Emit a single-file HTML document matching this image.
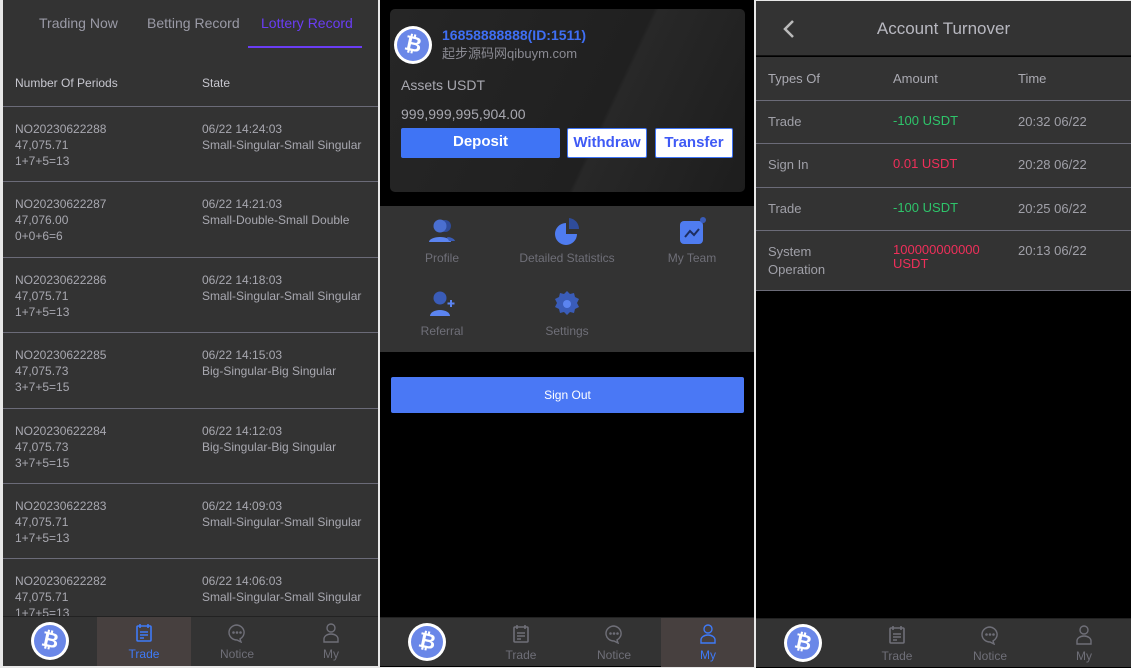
<!DOCTYPE html>
<html><head><meta charset="utf-8"><style>
*{margin:0;padding:0;box-sizing:border-box}
body{width:1131px;height:667px;background:#e8e8e8;font-family:"Liberation Sans","Noto Sans CJK SC",sans-serif;position:relative;overflow:hidden}
.p{position:absolute;top:0;height:667px;overflow:hidden}
#a{left:3px;width:375px;background:#333;top:0;height:666px}
#b{left:380px;width:374px;background:#000}
#c{left:756px;width:375px;background:#000;top:1px}
.tabs{position:absolute;top:0;left:0;right:0;height:50px;font-size:14px;color:#9a9aa6}
.tabs span{position:absolute;top:15px}
.ul{position:absolute;left:245px;width:114px;top:46px;height:2px;background:#6a3df5}
.hd{position:absolute;top:76px;font-size:12px;color:#c8c8d0}
.row{position:absolute;left:0;width:375px;border-top:1px solid #6b6b78;font-size:12px;color:#a8a8b0;line-height:16px}
.row .l{position:absolute;left:12px;top:14px}
.row .r{position:absolute;left:199px;top:14px}
.nav{position:absolute;left:0;right:0;height:49px;background:#333;border-top:1px solid #222;font-size:12px;color:#6f6f78}
.nav .it{position:absolute;top:0;width:94px;height:49px;text-align:center}
.nav .it .t{position:absolute;bottom:5px;left:0;right:0}
.nav .it svg{position:absolute;top:6px;left:37px}
.nav .on{background:#47403f;color:#3f7af7}
.coin{position:absolute;width:38px;height:38px;border-radius:50%;background:#fff;top:5px}
.coin:after{content:"";position:absolute;left:3px;top:3px;width:32px;height:32px;border-radius:50%;background:#6a87e8}
.coin b{position:absolute;z-index:2;left:0;right:0;top:7px;text-align:center;color:#fff;font-size:21px;font-weight:bold;transform:rotate(12deg)}
.card{position:absolute;left:10px;top:9px;width:355px;height:183px;border-radius:5px;background:linear-gradient(115deg,#262626 0%,#202020 60%,#282828 61%,#1d1d1d 100%)}
.btn{position:absolute;top:119px;height:30px;border-radius:2px;font-size:15px;font-weight:bold;text-align:center;line-height:28px}
.menu{position:absolute;left:0;right:0;top:206px;height:146px;background:#333;font-size:12px;color:#6f6f78}
.mi{position:absolute;width:124px;text-align:center}
.mi svg{display:block;margin:0 auto 6px}
.th{position:absolute;font-size:13px;color:#aaaab2}
.trow{position:absolute;left:0;width:375px;background:#333;border-top:1px solid #6b6b78;font-size:13px;color:#a0a0a8}
</style></head><body>

<div class="p" id="a">
 <div class="tabs"><span style="left:36px">Trading Now</span><span style="left:144px">Betting Record</span><span style="left:258px;color:#6a3df5">Lottery Record</span><div class="ul"></div></div>
 <div class="hd" style="left:12px">Number Of Periods</div><div class="hd" style="left:199px">State</div>
 <div class="row" style="top:106px;height:75px"><div class="l">NO20230622288<br>47,075.71<br>1+7+5=13</div><div class="r">06/22 14:24:03<br>Small-Singular-Small Singular</div></div>
 <div class="row" style="top:181px;height:76px"><div class="l">NO20230622287<br>47,076.00<br>0+0+6=6</div><div class="r">06/22 14:21:03<br>Small-Double-Small Double</div></div>
 <div class="row" style="top:257px;height:75px"><div class="l">NO20230622286<br>47,075.71<br>1+7+5=13</div><div class="r">06/22 14:18:03<br>Small-Singular-Small Singular</div></div>
 <div class="row" style="top:332px;height:76px"><div class="l">NO20230622285<br>47,075.73<br>3+7+5=15</div><div class="r">06/22 14:15:03<br>Big-Singular-Big Singular</div></div>
 <div class="row" style="top:408px;height:75px"><div class="l">NO20230622284<br>47,075.73<br>3+7+5=15</div><div class="r">06/22 14:12:03<br>Big-Singular-Big Singular</div></div>
 <div class="row" style="top:483px;height:75px"><div class="l">NO20230622283<br>47,075.71<br>1+7+5=13</div><div class="r">06/22 14:09:03<br>Small-Singular-Small Singular</div></div>
 <div class="row" style="top:558px;height:75px"><div class="l">NO20230622282<br>47,075.71<br>1+7+5=13</div><div class="r">06/22 14:06:03<br>Small-Singular-Small Singular</div></div>
 <div class="nav" style="top:616px">
  <div class="coin" style="left:28px"><b>₿</b></div>
  <div class="it on" style="left:94px"><svg width="20" height="20" viewBox="0 0 20 20" fill="none" stroke="#3f7af7" stroke-width="1.6"><rect x="3" y="3" width="14" height="15" rx="1"/><path d="M6 1v4M14 1v4M6 9h8M6 12h8M6 15h4"/></svg><div class="t">Trade</div></div>
  <div class="it" style="left:187px"><svg width="20" height="20" viewBox="0 0 20 20" fill="none" stroke="#6f6f78" stroke-width="1.4"><path d="M10 2a8 7.5 0 1 0 0 15l4 2-1-3a8 7.5 0 0 0-3-14z"/><circle cx="6.5" cy="9.5" r=".6" fill="#6f6f78"/><circle cx="10" cy="9.5" r=".6" fill="#6f6f78"/><circle cx="13.5" cy="9.5" r=".6" fill="#6f6f78"/></svg><div class="t">Notice</div></div>
  <div class="it" style="left:281px"><svg width="20" height="20" viewBox="0 0 20 20" fill="none" stroke="#6f6f78" stroke-width="1.4"><circle cx="10" cy="5" r="4"/><path d="M3 19v-3a7 5 0 0 1 14 0v3z"/></svg><div class="t">My</div></div>
 </div>
</div>

<div class="p" id="b">
 <div class="card">
  <div class="coin" style="left:4px;top:17px"><b>₿</b></div>
  <div style="position:absolute;left:52px;top:18px;color:#3f6ff5;font-weight:bold;font-size:14px">16858888888(ID:1511)</div>
  <div style="position:absolute;left:52px;top:34px;color:#8a8a92;font-size:13px">起步源码网qibuym.com</div>
  <div style="position:absolute;left:11px;top:68px;color:#a8a8b0;font-size:14px">Assets USDT</div>
  <div style="position:absolute;left:11px;top:97px;color:#a8a8b0;font-size:14px">999,999,995,904.00</div>
  <div class="btn" style="left:11px;width:159px;background:#3f74f5;color:#fff">Deposit</div>
  <div class="btn" style="left:177px;width:80px;background:#fff;color:#3f5af5;border:1px solid #3f74f5">Withdraw</div>
  <div class="btn" style="left:265px;width:78px;background:#fff;color:#3f5af5;border:1px solid #3f74f5">Transfer</div>
 </div>
 <div class="menu">
  <div class="mi" style="left:0;top:11px"><svg width="30" height="28" viewBox="0 0 30 28"><circle cx="18" cy="9" r="6" fill="#2f4c9a"/><circle cx="13" cy="9" r="6.5" fill="#4a6fd0"/><path d="M2 25a11 5 0 0 1 22 0z" fill="#5b84f0"/><path d="M20 20a8 5 0 0 1 8 4h-6z" fill="#3a5cb8"/></svg>Profile</div>
  <div class="mi" style="left:125px;top:11px"><svg width="30" height="28" viewBox="0 0 30 28"><path d="M14 6a11 11 0 1 0 11 11H14z" fill="#4f7cf0"/><path d="M17 1a11 11 0 0 1 10 11H17z" fill="#2f4c9a"/></svg>Detailed Statistics</div>
  <div class="mi" style="left:250px;top:11px"><svg width="30" height="28" viewBox="0 0 30 28"><rect x="3" y="4" width="23" height="23" rx="4" fill="#4f7cf0"/><path d="M8 20l5-6 4 4 5-6" stroke="#1e2e60" stroke-width="2" fill="none"/><circle cx="26" cy="3" r="3" fill="#3a5cb8"/></svg>My Team</div>
  <div class="mi" style="left:0;top:84px"><svg width="30" height="28" viewBox="0 0 30 28"><circle cx="13" cy="8" r="6.5" fill="#3a5cb8"/><path d="M3 26a10 6 0 0 1 20 0z" fill="#5b84f0"/><path d="M24 10v7M20.5 13.5h7" stroke="#5b84f0" stroke-width="2"/></svg>Referral</div>
  <div class="mi" style="left:125px;top:84px"><svg width="30" height="28" viewBox="0 0 30 28"><path d="M15 1l3 3 4-1 1 4 4 2-2 4 2 4-4 2-1 4-4-1-3 3-3-3-4 1-1-4-4-2 2-4-2-4 4-2 1-4 4 1z" fill="#3a5cb8"/><circle cx="15" cy="14" r="4" fill="#5b84f0"/></svg>Settings</div>
 </div>
 <div style="position:absolute;left:11px;top:377px;width:353px;height:36px;background:#4a78f5;border-radius:2px;color:#fff;font-size:12px;text-align:center;line-height:36px">Sign Out</div>
 <div class="nav" style="top:617px">
  <div class="coin" style="left:28px"><b>₿</b></div>
  <div class="it" style="left:94px"><svg width="20" height="20" viewBox="0 0 20 20" fill="none" stroke="#6f6f78" stroke-width="1.6"><rect x="3" y="3" width="14" height="15" rx="1"/><path d="M6 1v4M14 1v4M6 9h8M6 12h8M6 15h4"/></svg><div class="t">Trade</div></div>
  <div class="it" style="left:187px"><svg width="20" height="20" viewBox="0 0 20 20" fill="none" stroke="#6f6f78" stroke-width="1.4"><path d="M10 2a8 7.5 0 1 0 0 15l4 2-1-3a8 7.5 0 0 0-3-14z"/><circle cx="6.5" cy="9.5" r=".6" fill="#6f6f78"/><circle cx="10" cy="9.5" r=".6" fill="#6f6f78"/><circle cx="13.5" cy="9.5" r=".6" fill="#6f6f78"/></svg><div class="t">Notice</div></div>
  <div class="it on" style="left:281px"><svg width="20" height="20" viewBox="0 0 20 20" fill="none" stroke="#3f7af7" stroke-width="1.4"><circle cx="10" cy="5" r="4"/><path d="M3 19v-3a7 5 0 0 1 14 0v3z"/></svg><div class="t">My</div></div>
 </div>
</div>

<div class="p" id="c">
 <div style="position:absolute;left:0;right:0;top:0;height:55px;background:#333;border-bottom:1px solid #111"><svg style="position:absolute;left:26px;top:18px" width="14" height="20" viewBox="0 0 14 20"><path d="M11 2L3 10l8 8" stroke="#bbb" stroke-width="2.5" fill="none"/></svg><div style="position:absolute;left:0;right:0;top:18px;text-align:center;color:#b8b8c0;font-size:17px">Account Turnover</div></div>
 <div class="trow" style="top:56px;height:43px;border-top:0"><div class="th" style="left:12px;top:14px">Types Of</div><div class="th" style="left:137px;top:14px">Amount</div><div class="th" style="left:262px;top:14px">Time</div></div>
 <div class="trow" style="top:99px;height:43px"><span style="position:absolute;left:12px;top:13px">Trade</span><span style="position:absolute;left:137px;top:12px;color:#2ec46a">-100 USDT</span><span style="position:absolute;left:262px;top:13px">20:32 06/22</span></div>
 <div class="trow" style="top:142px;height:44px"><span style="position:absolute;left:12px;top:13px">Sign In</span><span style="position:absolute;left:137px;top:12px;color:#ef2f5a">0.01 USDT</span><span style="position:absolute;left:262px;top:13px">20:28 06/22</span></div>
 <div class="trow" style="top:186px;height:43px"><span style="position:absolute;left:12px;top:13px">Trade</span><span style="position:absolute;left:137px;top:12px;color:#2ec46a">-100 USDT</span><span style="position:absolute;left:262px;top:13px">20:25 06/22</span></div>
 <div class="trow" style="top:229px;height:61px;border-bottom:1px solid #6b6b78"><span style="position:absolute;left:12px;top:12px;line-height:18px">System<br>Operation</span><span style="position:absolute;left:137px;top:12px;color:#ef2f5a;line-height:14px">100000000000<br>USDT</span><span style="position:absolute;left:262px;top:12px">20:13 06/22</span></div>
 <div class="nav" style="top:617px">
  <div class="coin" style="left:28px"><b>₿</b></div>
  <div class="it" style="left:94px"><svg width="20" height="20" viewBox="0 0 20 20" fill="none" stroke="#6f6f78" stroke-width="1.6"><rect x="3" y="3" width="14" height="15" rx="1"/><path d="M6 1v4M14 1v4M6 9h8M6 12h8M6 15h4"/></svg><div class="t">Trade</div></div>
  <div class="it" style="left:187px"><svg width="20" height="20" viewBox="0 0 20 20" fill="none" stroke="#6f6f78" stroke-width="1.4"><path d="M10 2a8 7.5 0 1 0 0 15l4 2-1-3a8 7.5 0 0 0-3-14z"/><circle cx="6.5" cy="9.5" r=".6" fill="#6f6f78"/><circle cx="10" cy="9.5" r=".6" fill="#6f6f78"/><circle cx="13.5" cy="9.5" r=".6" fill="#6f6f78"/></svg><div class="t">Notice</div></div>
  <div class="it" style="left:281px"><svg width="20" height="20" viewBox="0 0 20 20" fill="none" stroke="#6f6f78" stroke-width="1.4"><circle cx="10" cy="5" r="4"/><path d="M3 19v-3a7 5 0 0 1 14 0v3z"/></svg><div class="t">My</div></div>
 </div>
</div>
</body></html>
